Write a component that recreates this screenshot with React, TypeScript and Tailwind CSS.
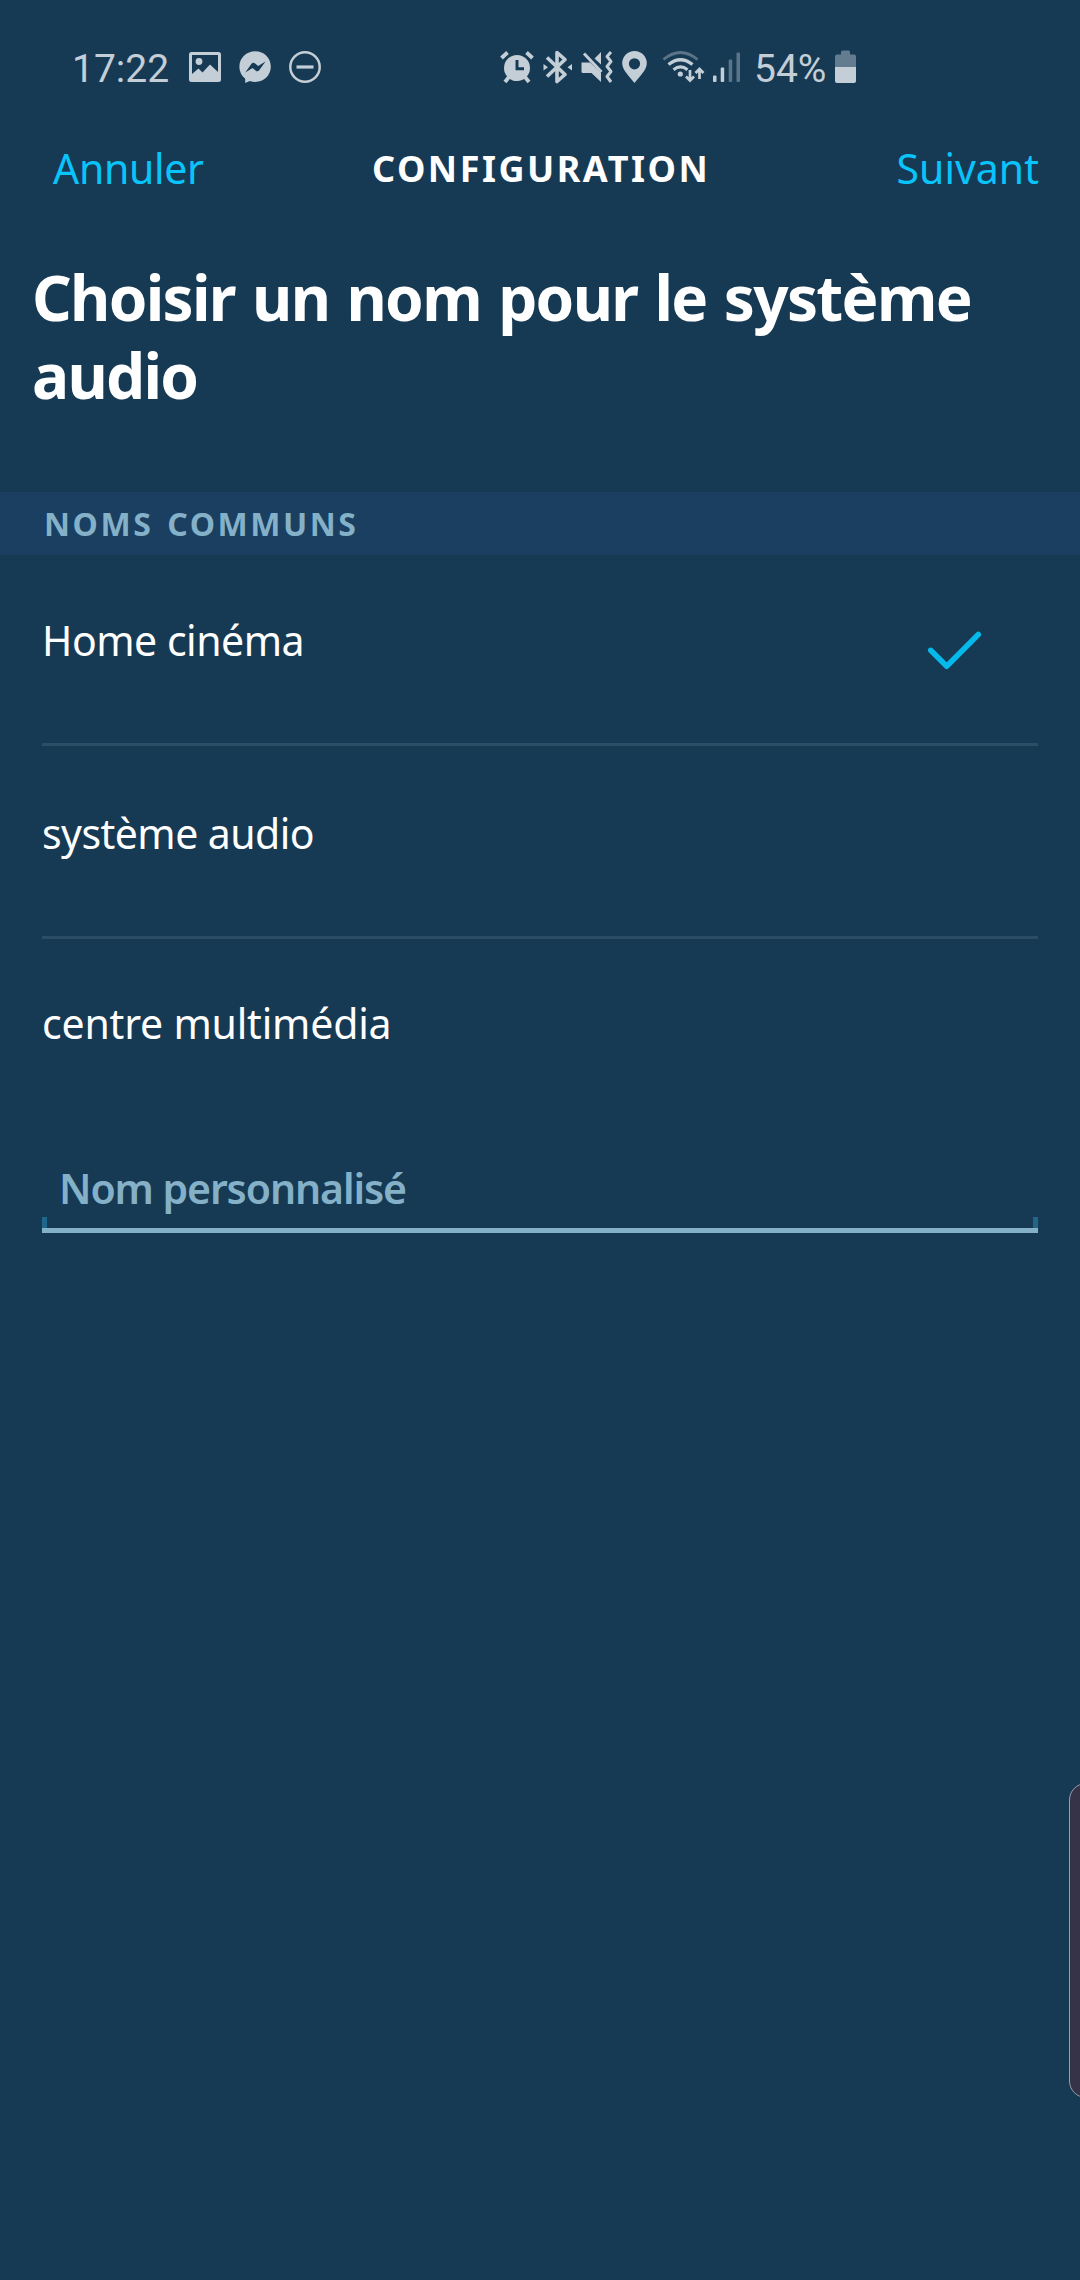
import { useState } from "react";

type Choice = {
  label: string;
  row: string;
  text: string;
};

const choices: Choice[] = [
  { label: "Home cinéma", row: "h-[191px] border-b-[3px] pt-[55px]", text: "tracking-[-0.48px]" },
  { label: "système audio", row: "h-[193px] border-b-[3px] pt-[57px]", text: "tracking-[-0.55px]" },
  { label: "centre multimédia", row: "h-[200px] pt-[54px]", text: "tracking-[-0.2px]" },
];

function ImageIcon() {
  return (
    <svg className="w-8 h-9" viewBox="189 50 32 36">
      <path
        fill="currentColor"
        fillRule="evenodd"
        d="M191.500 52h27a2.500 2.500 0 0 1 2.500 2.500v25a2.500 2.500 0 0 1-2.500 2.500h-27a2.500 2.500 0 0 1-2.500-2.500v-25a2.500 2.500 0 0 1 2.500-2.500zM192 55v19l6.500-5.500 4 4 7.500-8 8 7.500V55z"
      />
      <circle cx="199" cy="61.500" r="3.400" fill="currentColor" />
    </svg>
  );
}

function MessengerIcon() {
  return (
    <svg className="w-8 h-9" viewBox="239 50 32 36">
      <path
        fill="currentColor"
        d="M255.300 51.300c8.900 0 15.500 6.600 15.500 15.300s-6.600 15.300-15.500 15.300c-2 0-3.800-.3-5.500-.9l-4.600 2v-4.300c-3.500-2.800-5.800-7-5.800-12.100 0-8.700 7-15.300 15.900-15.300z"
      />
      <path
        fill="#173a54"
        d="M245.300 72.500l6.200-8.700c.9-1.200 2.200-1.300 3.300-.5l3.400 2.600 7.300-4.400-6.300 8.700c-.9 1.200-2.200 1.300-3.300.5l-3.400-2.600z"
      />
    </svg>
  );
}

function DndIcon() {
  return (
    <svg className="w-8 h-9" viewBox="289 50 32 36" fill="none" stroke="currentColor">
      <circle cx="305" cy="67" r="14.700" strokeWidth="2.500" />
      <path d="M296.500 67h17" strokeWidth="3.200" />
    </svg>
  );
}

function AlarmIcon() {
  return (
    <svg className="w-[34px] h-9" viewBox="500 50 34 36" fill="none" stroke="currentColor">
      <circle cx="517" cy="68" r="13" fill="currentColor" stroke="none" />
      <path d="M501.500 58l6-5.500M532.500 58l-6-5.500" strokeWidth="3.800" />
      <path d="M509 77l-4 5M525 77l4 5" strokeWidth="3.800" />
      <path d="M517 60v8.700h7" stroke="#173a54" strokeWidth="2.900" />
    </svg>
  );
}

function BluetoothIcon() {
  return (
    <svg className="w-[30px] h-9" viewBox="543 50 30 36" fill="none" stroke="currentColor">
      <path d="M547 57.500l18 17-8 7V52.500l8 7-18 17" strokeWidth="3.600" strokeLinejoin="round" />
      <path d="M543.500 64v6.500l4.500-3.200zM572 64v6.500l-4.500-3.200z" fill="currentColor" stroke="none" />
    </svg>
  );
}

function VibrateIcon() {
  return (
    <svg className="w-[32px] h-9" viewBox="581 50 32 36">
      <path
        fill="currentColor"
        d="M581.500 62.500h8.500l11 10.500v9l-9.500-9h-8.500a1.500 1.500 0 0 1-1.500-1.500zM594.500 58.500l6.500-6.500v12.500z"
      />
      <path d="M584 53.500l17.500 18.500" stroke="currentColor" strokeWidth="3" />
      <path
        d="M611 52l-4 4.500 4 5-4 5 4 5-4 5 4 5.500"
        fill="none"
        stroke="currentColor"
        strokeWidth="3"
        strokeLinejoin="round"
      />
    </svg>
  );
}

function PinIcon() {
  return (
    <svg className="w-[26px] h-9" viewBox="622 50 26 36">
      <path
        fill="currentColor"
        fillRule="evenodd"
        d="M634.500 51a12.300 12.300 0 0 1 12.300 12.300c0 7-7 12.700-12.300 19.700-5.300-7-12.300-12.700-12.300-19.700A12.300 12.300 0 0 1 634.500 51zm0 7.200a5.600 5.600 0 1 0 0 11.200 5.600 5.600 0 0 0 0-11.200z"
      />
    </svg>
  );
}

function WifiIcon() {
  return (
    <svg className="w-[43px] h-9" viewBox="662 50 43 36" fill="none" stroke="currentColor">
      <path d="M663.500 59.500q17-14 34 0" strokeWidth="2.800" opacity=".4" />
      <path d="M668.500 64.500q12-9.500 24 0" strokeWidth="3.200" />
      <path d="M673.500 69.700q7-5.500 14 0" strokeWidth="3.200" />
      <circle cx="680.300" cy="74" r="2.600" fill="currentColor" stroke="none" />
      <path d="M690 70v10M686 76.500l4 4 4-4M699.500 79V69M695.500 73l4-4 4 4" strokeWidth="2.700" />
    </svg>
  );
}

function SignalIcon() {
  return (
    <svg className="w-[28px] h-9" viewBox="713 50 28 36" fill="currentColor">
      <rect x="713" y="75.500" width="3.500" height="6.500" rx="1" />
      <rect x="720.700" y="67.500" width="3.500" height="14.500" rx="1" />
      <rect x="728.700" y="59.500" width="3.500" height="22.500" rx="1" opacity=".4" />
      <rect x="736.500" y="52.500" width="3.500" height="29.500" rx="1" opacity=".4" />
    </svg>
  );
}

function BatteryIcon() {
  return (
    <svg className="w-[22px] h-9" viewBox="835 50 22 36" fill="currentColor">
      <path d="M835 67V56.500a2 2 0 0 1 2-2h4V52a1.500 1.500 0 0 1 1.500-1.500h6A1.500 1.500 0 0 1 850 52v2.500h4a2 2 0 0 1 2 2V67z" opacity=".45" />
      <path d="M835 67h21v14a2 2 0 0 1-2 2h-17a2 2 0 0 1-2-2z" />
    </svg>
  );
}

function StatusBar() {
  return (
    <div className="flex h-[136px] items-center pl-[72px] font-['Roboto',sans-serif] text-[39px] leading-none text-[#c3ced7]">
      <span className="w-[117px] pt-[2px]">17:22</span>
      <div className="flex w-[311px] gap-[18px]">
        <ImageIcon />
        <MessengerIcon />
        <DndIcon />
      </div>
      <div className="flex w-[254px]">
        <AlarmIcon />
        <div className="ml-[9px]"><BluetoothIcon /></div>
        <div className="ml-[8px]"><VibrateIcon /></div>
        <div className="ml-[9px]"><PinIcon /></div>
        <div className="ml-[14px]"><WifiIcon /></div>
        <div className="ml-[8px]"><SignalIcon /></div>
      </div>
      <span className="w-[81px] pt-[2px]">54%</span>
      <BatteryIcon />
    </div>
  );
}

export default function App() {
  const [selected, setSelected] = useState("Home cinéma");

  return (
    <div className="relative h-[2280px] w-[1080px] overflow-hidden bg-[#173a54] font-['Noto_Sans',sans-serif] text-white">
      <StatusBar />

      {/* Navigation */}
      <div className="flex h-[64px] items-center text-[41px] leading-none">
        <div className="w-[372px] pl-[53px]">
          <button className="tracking-[-0.3px] text-[#09c4fb]">Annuler</button>
        </div>
        <div className="flex-1 whitespace-nowrap pt-[2px] text-[36px] font-bold tracking-[2.5px]">
          CONFIGURATION
        </div>
        <button className="pr-[41px] text-[#09c4fb]">Suivant</button>
      </div>

      <h1 className="mt-[58px] h-[234px] pl-8 text-[62px] font-bold leading-[78px] tracking-[-1.7px] [word-spacing:2.8px]">
        Choisir un nom pour le système
        <br />
        audio
      </h1>

      <div className="flex h-[63px] items-center bg-[#1a3f60] pl-[44px] text-[32px] font-bold leading-none tracking-[2.55px] text-[#84b1c8] [word-spacing:3px]">
        NOMS COMMUNS
      </div>

      {/* Common names */}
      <div className="px-[42px]">
        {choices.map((c) => (
          <div
            key={c.label}
            onClick={() => setSelected(c.label)}
            className={`flex items-start justify-between border-[#2b4d66] ${c.row}`}
          >
            <span className={`text-[41px] leading-[60px] ${c.text}`}>{c.label}</span>
            {selected === c.label && (
              <svg className="mr-[56px] mt-[21px] h-[40px] w-[56px]" viewBox="926 631 56 40">
                <path
                  d="M930.700 650.300l16 16 31.600-31.800"
                  fill="none"
                  stroke="#05b9ea"
                  strokeWidth="5.500"
                  strokeLinecap="round"
                  strokeLinejoin="round"
                />
              </svg>
            )}
          </div>
        ))}

        {/* Custom name field */}
        <div className="mt-[19px] pl-[17px] text-[41px] font-semibold leading-[60px] tracking-[-1.1px] text-[#84b1c8]">
          Nom personnalisé
        </div>
        <div className="-mt-px h-[11px] border-x-[5px] border-[#20658a]" />
        <div className="h-[5px] bg-[#84b1c8]" />
      </div>

      {/* Edge panel handle */}
      <div className="absolute left-[1069px] top-[1783px] h-[315px] w-[40px] rounded-[17px] border border-[#989dab] bg-[#363349]" />
    </div>
  );
}
